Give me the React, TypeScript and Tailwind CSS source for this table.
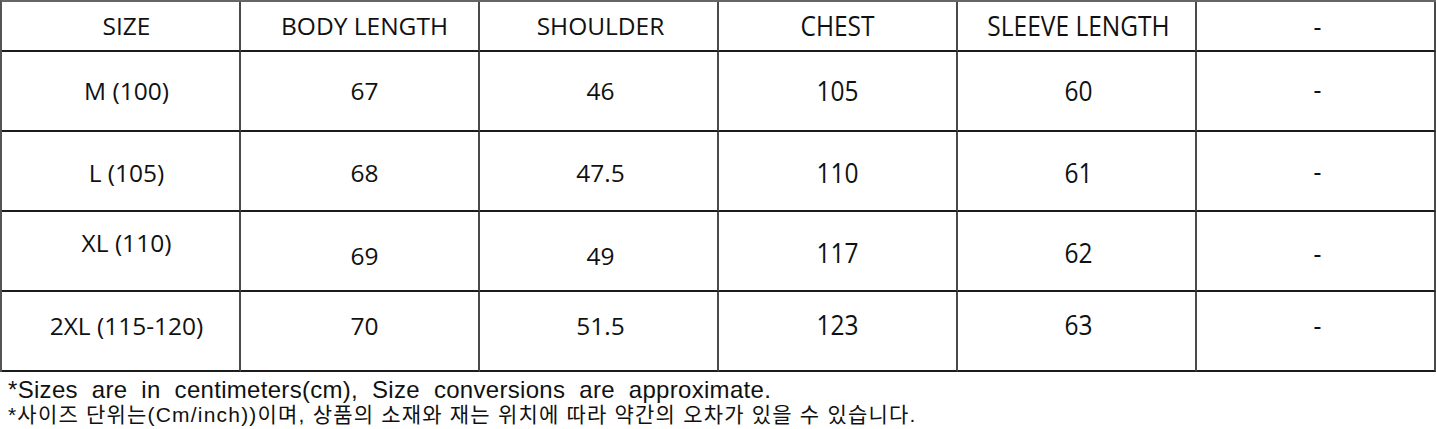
import React from "react";

const header = ["SIZE", "BODY LENGTH", "SHOULDER", "CHEST", "SLEEVE LENGTH", "-"];

const colPad = ["pl-[12px]", "pl-[10px]", "pl-[4px]", "pl-0", "pl-[4px]", "pl-[4px]"];

const rows: { cells: string[]; pads: string[] }[] = [
  { cells: ["M (100)", "67", "46", "105", "60", "-"], pads: ["pt-0", "pt-[1px]", "pt-[1px]", "pt-0", "pt-0", "pb-[4px]"] },
  { cells: ["L (105)", "68", "47.5", "110", "61", "-"], pads: ["pt-[4px]", "pt-[4px]", "pt-[4px]", "pt-[4px]", "pt-[4px]", "pt-0"] },
  { cells: ["XL (110)", "69", "49", "117", "62", "-"], pads: ["pb-[16px]", "pt-[10px]", "pt-[10px]", "pt-[4px]", "pt-[4px]", "pt-[4px]"] },
  { cells: ["2XL (115-120)", "70", "51.5", "123", "63", "-"], pads: ["pb-[10px]", "pb-[10px]", "pb-[10px]", "pb-[12px]", "pb-[12px]", "pb-[12px]"] },
];

function TextCell({ text, col, pad, h }: { text: string; col: number; pad: string; h: string }) {
  const condensed = col >= 3;
  return (
    <div
      className={`flex items-center justify-center border-r-2 border-b-2 border-r-[#4a4a4a] border-b-[#1c1c1c] ${h} ${pad} ${colPad[col]}`}
    >
      <span className={condensed ? "inline-block scale-y-[1.1]" : "inline-block"}>{text}</span>
    </div>
  );
}

export default function App() {
  return (
    <div className="w-[1436px] h-[429px] bg-white text-[#111]">
      <div
        className="grid grid-cols-[repeat(6,239px)] border-l-2 border-t-2 border-l-[#555] border-t-[#666] text-[24.5px] leading-none"
        style={{ fontFamily: '"Open Sans", "Noto Sans", sans-serif' }}
      >
        {header.map((t, i) => (
          <TextCell key={`h${i}`} text={t} col={i} pad="pt-0" h="h-[50px]" />
        ))}
        {rows.map((r, ri) =>
          r.cells.map((t, i) => (
            <TextCell key={`r${ri}c${i}`} text={t} col={i} pad={r.pads[i]} h="h-[80px]" />
          ))
        )}
      </div>
      <div
        className="pl-[8px] pt-[6px] text-[#111]"
        style={{ fontFamily: '"Liberation Sans", Arial, "Noto Sans CJK KR", sans-serif' }}
      >
        <p className="text-[24px] leading-[24px] tracking-[0.3px] [word-spacing:7px]">
          *Sizes are in centimeters(cm), Size conversions are approximate.
        </p>
        <p
          className="text-[21px] leading-[22px] tracking-[1.2px] mt-[2px]"
          style={{ fontFamily: '"Liberation Sans", "Noto Sans CJK KR", sans-serif' }}
        >
          *사이즈 단위는(Cm/inch))이며, 상품의 소재와 재는 위치에 따라 약간의 오차가 있을 수 있습니다.
        </p>
      </div>
    </div>
  );
}
